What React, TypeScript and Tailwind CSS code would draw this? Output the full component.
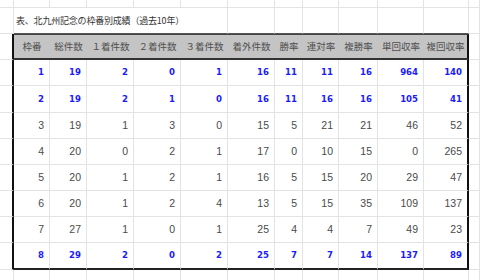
import React from "react";

const W = [14, 36, 37, 47, 47, 47, 47, 28, 36, 39, 46, 45, 11];
const GRID = "border-[#e3e3e3]";
const JP = { fontFamily: '"Noto Sans CJK JP", "Noto Sans", sans-serif' };

const headers = ["枠番", "総件数", "１着件数", "２着件数", "３着件数", "着外件数", "勝率", "連対率", "複勝率", "単回収率", "複回収率"];

const rows: { v: number[]; hi: boolean }[] = [
  { v: [1, 19, 2, 0, 1, 16, 11, 11, 16, 964, 140], hi: true },
  { v: [2, 19, 2, 1, 0, 16, 11, 16, 16, 105, 41], hi: true },
  { v: [3, 19, 1, 3, 0, 15, 5, 21, 21, 46, 52], hi: false },
  { v: [4, 20, 0, 2, 1, 17, 0, 10, 15, 0, 265], hi: false },
  { v: [5, 20, 1, 2, 1, 16, 5, 15, 20, 29, 47], hi: false },
  { v: [6, 20, 1, 2, 4, 13, 5, 15, 35, 109, 137], hi: false },
  { v: [7, 27, 1, 0, 1, 25, 4, 4, 7, 49, 23], hi: false },
  { v: [8, 29, 2, 0, 2, 25, 7, 7, 14, 137, 89], hi: true },
];
const rowH = [26, 27, 26, 26, 26, 26, 26, 27];

function Blank({ i, h, extra = "" }: { i: number; h: number; extra?: string }) {
  return (
    <div
      className={`shrink-0 border-r border-b ${GRID} ${extra}`}
      style={{ width: W[i], height: h }}
    />
  );
}

export default function App() {
  return (
    <div className="w-[480px] h-[280px] overflow-hidden bg-white flex flex-col">
      {/* top partial row */}
      <div className="flex">
        {W.map((_, i) => (
          <Blank key={i} i={i} h={8} />
        ))}
      </div>
      {/* title row */}
      <div className="flex">
        <Blank i={0} h={26} />
        <div
          className={`shrink-0 h-[26px] border-r border-b ${GRID} border-b-[#555] flex items-center pl-[2px] text-[9px] tracking-[-0.2px] text-[#333] whitespace-nowrap`}
          style={{ ...JP, width: W[1] + W[2] + W[3] + W[4] + W[5] }}
        >
          表、北九州記念の枠番別成績（過去10年）
        </div>
        {[6, 7, 8, 9, 10, 11].map((i) => (
          <Blank key={i} i={i} h={26} extra="border-b-[#555]" />
        ))}
        <Blank i={12} h={26} />
      </div>
      {/* header row */}
      <div className="flex">
        <Blank i={0} h={26} extra="border-r-2 border-r-[#111]" />
        {headers.map((t, k) => (
          <div
            key={k}
            className={`shrink-0 h-[26px] bg-[#c4c4c4] border-t border-t-[#444] border-b-2 border-b-[#333] flex items-center justify-center text-[9.5px] text-[#4f4f4f] whitespace-nowrap ${
              k === 10 ? "border-r-2 border-r-[#111]" : ""
            }`}
            style={{ ...JP, width: W[k + 1] }}
          >
            {t}
          </div>
        ))}
        <Blank i={12} h={26} />
      </div>
      {/* data rows */}
      {rows.map((r, ri) => {
        const last = ri === rows.length - 1;
        const h = rowH[ri];
        return (
          <div className="flex" key={ri}>
            <Blank i={0} h={h} extra="border-r-2 border-r-[#111]" />
            {r.v.map((n, k) => (
              <div
                key={k}
                className={`shrink-0 flex items-center justify-end pr-[5px] border-b ${
                  last ? "border-b-2 border-b-[#222]" : GRID
                } ${k === 10 ? "border-r-2 border-r-[#111]" : `border-r ${GRID}`} ${
                  r.hi
                    ? "text-[#1a1aff] font-bold"
                    : "text-[#4a4a4a]"
                }`}
                style={{
                  width: W[k + 1],
                  height: h,
                  fontFamily: r.hi
                    ? '"DejaVu Sans Condensed", "DejaVu Sans", sans-serif'
                    : '"Liberation Sans", Arial, sans-serif',
                  fontSize: r.hi ? 9.5 : 10.5,
                }}
              >
                {n}
              </div>
            ))}
            <Blank i={12} h={h} />
          </div>
        );
      })}
      {/* bottom partial row */}
      <div className="flex">
        {W.map((_, i) => (
          <Blank key={i} i={i} h={20} />
        ))}
      </div>
    </div>
  );
}
